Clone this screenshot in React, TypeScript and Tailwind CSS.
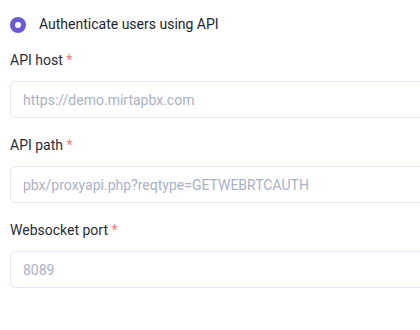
import React from 'react';

const fields = [
  { label: 'API host', placeholder: 'https://demo.mirtapbx.com' },
  { label: 'API path', placeholder: 'pbx/proxyapi.php?reqtype=GETWEBRTCAUTH' },
  { label: 'Websocket port', placeholder: '8089' },
];

export default function App() {
  return (
    <div className="w-[420px] h-[330px] overflow-hidden bg-white pl-[10px] font-['Roboto',sans-serif] text-[14px]">
      <label className="flex items-center h-[48px] pt-[1px]">
        <span className="flex items-center justify-center w-[16px] h-[16px] rounded-full bg-[#6a5bd2]">
          <span className="w-[6px] h-[6px] rounded-full bg-white" />
        </span>
        <span className="ml-[13px] text-[#222430]">Authenticate users using API</span>
      </label>
      <div className="flex flex-col">
        {fields.map((f) => (
          <div key={f.label} className="flex flex-col h-[85px] pt-[2px]">
            <div className="h-[20px] leading-[20px] text-[#2a2d3a]">
              {f.label} <span className="text-[#f47a7a]">*</span>
            </div>
            <input
              className="mt-[11px] w-[430px] h-[37px] rounded-[5px] border border-[#e6e4f4] px-[12px] text-[14px] outline-none placeholder:text-[#aab1c6]"
              placeholder={f.placeholder}
            />
          </div>
        ))}
      </div>
    </div>
  );
}
